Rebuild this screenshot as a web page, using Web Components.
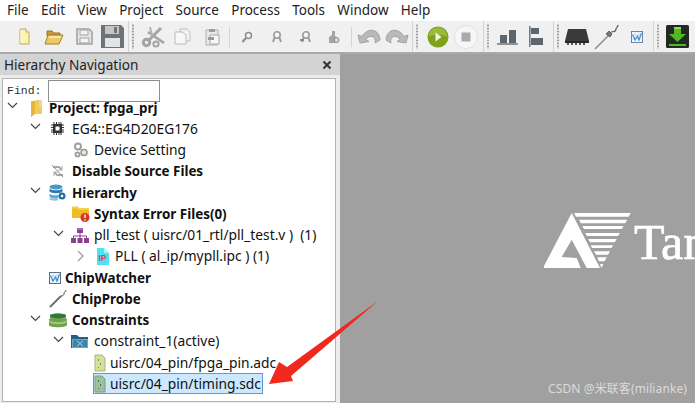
<!DOCTYPE html>
<html>
<head>
<meta charset="utf-8">
<title>Hierarchy Navigation</title>
<style>
    html, body { margin: 0; height: 100%; overflow: hidden; background: #a0a0a0; }
    body { font-family: "Noto Sans", "Open Sans", sans-serif; font-size: 14px; color: #1a1a1a; }
</style>
</head>
<body>

<ide-app></ide-app>

<script>
const ICONS = {
    newfile: [11, 17, `<path d="M1 1h6l3 3v12H1z" fill="#fdf3b0" stroke="#b9a866"/><path d="M7 1v3h3" fill="#fff" stroke="#b9a866"/><path d="M2 2v13" stroke="#fffde6"/>`],
    open: [20, 18, `<path d="M3 3h5l2 2h6v3H3z" fill="#c99a3a" stroke="#9c7420"/><path d="M1 16 4 7h15l-4 9z" fill="#f0c765" stroke="#a87e28"/><path d="M5 9h12" stroke="#fbe6a8" stroke-width="2"/>`],
    savegray: [17, 17, `<path d="M1 1h12l3 3v12H1z" fill="#e6e6e6" stroke="#a3a3a3" stroke-width="1.6"/><path d="M4 2h8v5H4zM4 10h9v5H4z" fill="#f2f2f2" stroke="#a3a3a3"/>`],
    save: [25, 25, `<path d="M1 1h20l3 3v20H1z" fill="#6f7377"/><path d="M5 2h14v8H5z" fill="#c4c6c8"/><path d="M14 3h3v6h-3z" fill="#6f7377"/><path d="M5 14h15v9H5z" fill="#e2e3e4"/>`],
    scissors: [25, 22, `<g fill="none" stroke="#a4a4a4" stroke-width="3"><path d="M8 14 20 2"/><path d="M7 6 23 17" stroke-width="2.6"/><circle cx="5.5" cy="16.5" r="3.2"/><circle cx="15" cy="18" r="2.6" stroke-width="2"/></g><path d="M8 1h2l2 8-2 1z" fill="#b4b4b4"/>`],
    copy: [17, 17, `<path d="M6 1h7l3 3v9H6z" fill="#f1f1f1" stroke="#c0c0c0"/><path d="M1 4h8l3 3v9H1z" fill="#f7f7f7" stroke="#bcbcbc"/>`],
    paste: [16, 18, `<path d="M2 2h12v15H2z" fill="#e8e8e8" stroke="#b0b0b0"/><path d="M5 1h6v3H5z" fill="#9c9c9c"/><path d="M6 7h9v9H6z" fill="#f6f6f6" stroke="#a8a8a8"/><path d="M4 9h6v3H4z" fill="#9a9a9a"/>`],
    find1: [12, 12, `<circle cx="7.5" cy="4.5" r="3" fill="#f3f3f3" stroke="#8d8d8d" stroke-width="1.5"/><path d="M5 7 1.500 11" stroke="#8d8d8d" stroke-width="2"/>`],
    find2: [12, 13, `<circle cx="6" cy="5" r="3.2" fill="#f3f3f3" stroke="#9a9a9a" stroke-width="1.6"/><path d="M2 12 3.500 8M10 12 8.500 8" stroke="#9a9a9a" stroke-width="2"/>`],
    find3: [13, 13, `<circle cx="7" cy="5" r="3.2" fill="#f3f3f3" stroke="#9a9a9a" stroke-width="1.6"/><path d="M3 12 4.500 8M11 12 9.500 8" stroke="#9a9a9a" stroke-width="2"/><path d="M1 10h4" stroke="#777" stroke-width="1.500"/>`],
    find4: [12, 14, `<path d="M4 1h3v5l3 2v5H1V7l3-2z" fill="#a5a5a5"/><circle cx="8.500" cy="10" r="2.500" fill="#d6d6d6" stroke="#8a8a8a"/>`],
    undo: [24, 17, `<path d="M3 15 1 7l4 1.500C8 3 14 1 18 3c3 1.500 5 5 5 9l-5 3c1-4-1-6-3-6.500-3-.5-5 1-6 3l3 2z" fill="#b9b9b9" stroke="#a3a3a3"/>`],
    redo: [25, 17, `<path d="M22 15l2-8-4 1.500C17 3 11 1 7 3 4 4.500 2 8 2 12l5 3c-1-4 1-6 3-6.500 3-.5 5 1 6 3l-3 2z" fill="#b9b9b9" stroke="#a3a3a3"/>`],
    run: [22, 22, `<circle cx="11" cy="11" r="10.500" fill="#7fa21b"/><path d="M1.500 11a9.500 9.500 0 0 1 19 0c-4-3-15-3-19 0z" fill="#98bb38"/><path d="M8.500 6.500v9l6-4.500z" fill="#f2f6e0"/>`],
    stop: [24, 24, `<circle cx="12" cy="12" r="11.500" fill="#f6f6f6" stroke="#e0e0e0"/><rect x="7.500" y="7.500" width="9" height="9" fill="#a9a9a9"/>`],
    bars: [21, 16, `<path d="M3 6h7v8H3zM12 1h7v13h-7z" fill="#5c666e"/><path d="M0 15h21" stroke="#6d767d" stroke-width="1.500"/>`],
    align: [15, 21, `<path d="M.8 0v21" stroke="#6d767d" stroke-width="1.500"/><path d="M2 2h8v6H2zM2 12h12v7H2z" fill="#5c666e"/>`],
    chip: [24, 17, `<path d="M3 1h18l3 12H0z" fill="#3a3a3a"/><path d="M0 13h24v2H0z" fill="#262626"/><path d="M2 15h2v2H2zM6 15h2v2H6zM10 15h2v2h-2zM14 15h2v2h-2zM18 15h2v2h-2z" fill="#555"/>`],
    probe: [26, 26, `<path d="M1 25 17 9" stroke="#8a8a8a" stroke-width="1.500" fill="none"/><path d="M15 7l3 3-2 3-4-3z" fill="#777" stroke="#666"/><path d="M17 8c3 0 5-1 5-3 0-1.500 2-1.500 2-4" fill="none" stroke="#555" stroke-width="1.200"/>`],
    watcher: [12, 12, `<rect x=".5" y=".5" width="11" height="11" fill="#f5f8fd" stroke="#6a7f9c"/><path d="M.5 4h11M.5 8h11M4 .5v11M8 .5v11" stroke="#ccd5e2" stroke-width=".7"/><path d="M1.500 3.500 4 9l2.500-4L8 9l2.500-7" fill="none" stroke="#3f8fd8" stroke-width="1.200"/>`],
    download: [23, 23, `<rect width="23" height="23" rx="1.500" fill="#202a20"/><path d="M8 2h7v7h5l-8.500 8L3 9h5z" fill="#52b52a"/><path d="M8 2h7v2H8z" fill="#9ad857"/><path d="M3 19h17v2H3z" fill="#52b52a"/>`],
    project: [13, 18, `<path d="M1 2h4l1-1h6v14H4l-3 3z" fill="#f2cc5a"/><path d="M1 2h4v13l-4 3z" fill="#e5b53c"/><path d="M9 1h3v7l-1.500-1L9 8z" fill="#dcdcb4"/>`],
    cpu: [15, 15, `<path d="M3 3h9v9H3z" fill="#333"/><path d="M5.500 5.500h4v4h-4z" fill="#fff"/><path d="M1 4h2M1 6.500h2M1 9h2M1 11h2M12 4h2M12 6.500h2M12 9h2M12 11h2M4 1v2M6.500 1v2M9 1v2M11 1v2M4 12v2M6.500 12v2M9 12v2M11 12v2" stroke="#333"/>`],
    gears: [15, 16, `<g fill="none" stroke="#a0a0a0" stroke-width="2"><circle cx="5" cy="4.500" r="3"/><circle cx="4.500" cy="12.500" r="2"/></g><circle cx="11" cy="10.500" r="3" fill="#e6e6e6" stroke="#8d9a8a" stroke-width="1.500"/>`],
    disable: [13, 14, `<path d="M2 3h6l3 3M12 11H6L3 8" fill="none" stroke="#8a8f94" stroke-width="1.300"/><path d="M1 1l11 12" stroke="#8a8f94"/><path d="M11 2v4H7M3 12V8h4" fill="none" stroke="#a8adb2"/>`],
    hierarchy: [17, 17, `<ellipse cx="7" cy="3" rx="6.500" ry="2.500" fill="#4a9ac9"/><path d="M.5 4v3c0 3 13 3 13 0V4c0 3-13 3-13 0z" fill="#2f7cb0"/><path d="M.5 9v3c0 3 9 3 9 1V11c-3 .5-9 .5-9-2z" fill="#5aa8d6"/><path d="M.5 14v1c0 2 8 2 9 1l-1-2c-3 1-8 0-8 0z" fill="#8cc3e2"/><circle cx="13" cy="12" r="3.500" fill="#1f6d9f"/><circle cx="13" cy="12" r="1.300" fill="#fff"/>`],
    syntax: [18, 18, `<path d="M0 3h6l1.500 2H17v8H0z" fill="#f0bb25"/><path d="M0 1.500h6L7.500 3H17v2H7L5.500 3.500H0z" fill="#f7d04a"/><circle cx="13" cy="12.500" r="4.500" fill="#d9342b"/><path d="M13 9.500v3.500" stroke="#fff" stroke-width="1.400"/><circle cx="13" cy="15" r=".8" fill="#fff"/>`],
    tree: [18, 15, `<path d="M6 0h6v5H6zM0 10h5v5H0zM6.500 10h5v5h-5zM13 10h5v5h-5z" fill="#8c3f8f"/><path d="M9 5v3M2.500 10V8h13v2M9 8v2" fill="none" stroke="#8c3f8f"/><path d="M6.500 0h5v2h-5z" fill="#b56ab8"/>`],
    ip: [12, 17, `<path d="M0 0h7l5 5v12H0z" fill="#49e3f4"/><path d="M7 0l5 5H7z" fill="#b2f3fa"/><text x="1.500" y="13" font-family="Liberation Sans, sans-serif" font-size="8.500" font-weight="700" fill="#e23c52">IP</text>`],
    chipwatch: [12, 12, `<rect x=".5" y=".5" width="11" height="11" fill="#f5f8fd" stroke="#55697f"/><path d="M.5 4h11M.5 8h11M4 .5v11M8 .5v11" stroke="#c4cedb" stroke-width=".7"/><path d="M1.500 3.500 4 9l2.500-4L8 9l2.500-7" fill="none" stroke="#3590d8" stroke-width="1.200"/>`],
    chipprobe: [18, 18, `<path d="M1 17 12 6" stroke="#6f6f6f" stroke-width="2" fill="none"/><path d="M12 6c3 0 3-2 3-3s2-1 2-3" fill="none" stroke="#444"/>`],
    constraints: [18, 15, `<path d="M1 2c0-2 16-2 16 0v4H1z" fill="#7fa856"/><ellipse cx="9" cy="3" rx="8" ry="2.600" fill="#2f7a3a"/><path d="M0 6h18v6c0 3-18 3-18 0z" fill="#6ea24c"/><path d="M0 7c3 3 15 3 18 0v2c-3 3-15 3-18 0z" fill="#a5c77b"/>`],
    folder: [18, 15, `<path d="M0 1h6l2 2h9v11H0z" fill="#1f6285"/><path d="M1 5h16v9H1z" fill="#6fa9c7"/><path d="M2 6h14v7H2z" fill="#3f84a8"/><path d="M6 7l6 5M12 7l-6 5" stroke="#a8d0e2"/>`],
    sdc: [12, 18, `<path d="M1 1h7l3 3v13H1z" fill="#d3e09c" stroke="#aab57d"/><path d="M4 5h1v2H4zM6 9h1v2H6zM4 13h1v1H4z" fill="#7c8f6a"/>`],
    sdcsel: [12, 18, `<path d="M1 1h7l3 3v13H1z" fill="#9cc09a" stroke="#7c9e90"/><path d="M4 5h1v2H4zM6 9h1v2H6zM4 13h1v1H4z" fill="#4f6f6f"/>`],
    close: [10, 10, `<path d="M1.500 1.500l7 7M8.500 1.500l-7 7" stroke="#333" stroke-width="2"/>`]
};

class IdeIcon extends HTMLElement {
    constructor(){
        super();
        this.shadow = this.attachShadow({ mode: 'open' });
    }
    connectedCallback(){
        let [w, h, body] = ICONS[this.getAttribute("name")];
        this.shadow.innerHTML = `
        <style>
            :host { display: inline-flex; flex: none; }
            svg { display: block; }
        </style>
        <svg width="${w}" height="${h}" viewBox="0 0 ${w} ${h}">${body}</svg>`;
    }
}
customElements.define('ide-icon', IdeIcon);

class IdeMenubar extends HTMLElement {
    constructor(){
        super();
        this.shadow = this.attachShadow({ mode: 'open' });
    }
    connectedCallback(){
        let items = ["File", "Edit", "View", "Project", "Source", "Process", "Tools", "Window", "Help"];
        this.shadow.innerHTML = `
        <style>
            :host { display: flex; height: 21px; padding-left: 7px; gap: 12.3px; align-items: center; background: #fff; color: #222; font-size: 13.5px; }
            span { line-height: 21px; }
        </style>
        ${items.map(i => `<span>${i}</span>`).join("")}`;
    }
}
customElements.define('ide-menubar', IdeMenubar);

class IdeToolbar extends HTMLElement {
    constructor(){
        super();
        this.shadow = this.attachShadow({ mode: 'open' });
    }
    connectedCallback(){
        this.shadow.innerHTML = `
        <style>
            :host { display: flex; height: 31px; align-items: center; background: #f0f0f0; border-bottom: 2px solid #a9a9a9; }
        </style>
        <slot></slot>`;
    }
}
customElements.define('ide-toolbar', IdeToolbar);

class IdeToolSep extends HTMLElement {
    constructor(){
        super();
        this.shadow = this.attachShadow({ mode: 'open' });
    }
    connectedCallback(){
        let grip = this.hasAttribute("thin") ? "" : `<i></i>`;
        this.shadow.innerHTML = `
        <style>
            :host { display: flex; flex: none; align-items: center; gap: 3px; height: 31px; }
            b { display: block; width: 1px; height: 100%; background: #d4d4d4; }
            i { display: block; width: 2px; height: 25px; background-image: radial-gradient(#9e9e9e .7px, transparent .9px); background-size: 2px 3px; }
            :host([thin]) b { height: 20px; }
        </style>
        <b></b>${grip}`;
    }
}
customElements.define('ide-tool-sep', IdeToolSep);

class IdeTreeRow extends HTMLElement {
    constructor(){
        super();
        this.shadow = this.attachShadow({ mode: 'open' });
    }
    connectedCallback(){
        let open = this.getAttribute("arrow");
        let arrow = "";
        if (open == "open") arrow = `<path d="M1 1l4.500 4.500L10 1" fill="none" stroke="#444" stroke-width="1.200"/>`;
        if (open == "closed") arrow = `<path d="M1 0l5 5-5 5" fill="none" stroke="#999" stroke-width="1.200"/>`;
        this.shadow.innerHTML = `
        <style>
            :host { display: flex; align-items: center; height: 21.25px; padding-left: var(--indent, 0px); white-space: nowrap; font-size: 13.8px; color: #111; }
            :host([bold]) { font-size: 13.4px; font-weight: 700; }
            .arrow { width: var(--arrow-w, 23px); flex: none; display: flex; }
            .item { display: flex; align-items: center; }
            .iconbox { display: flex; flex: none; width: var(--icon-w, 22px); }
            .label { line-height: 18px; height: 18px; padding: 0 1px; }
            :host([selected]) .item { background: #cce8ff; box-shadow: 0 0 0 1px #5b9bd5; height: 19px; }
        </style>
        <span class="arrow"><svg width="11" height="11" viewBox="0 0 11 11">${arrow}</svg></span>
        <span class="item">
            <span class="iconbox"><slot name="icon"></slot></span>
            <span class="label"><slot></slot></span>
        </span>`;
    }
}
customElements.define('ide-tree-row', IdeTreeRow);

class IdeNavPanel extends HTMLElement {
    constructor(){
        super();
        this.shadow = this.attachShadow({ mode: 'open' });
    }
    connectedCallback(){
        this.shadow.innerHTML = `
        <style>
            :host { display: flex; flex-direction: column; width: 340px; flex: none; background: #ececec; overflow: hidden; }
            .title { display: flex; align-items: center; justify-content: space-between; height: 21px; padding: 0 8px 0 4px; background: #d3d3d3; color: #222; font-size: 13.6px; flex: none; }
            .body { flex: 1; margin: 3px 4px 1px 2px; background: #fff; border: 1px solid #b4b4b4; overflow: hidden; }
            .find { display: flex; align-items: flex-start; height: 17px; padding-left: 4px; margin-top: 1px; }
            .find label { font-family: "Liberation Mono", monospace; font-size: 11.5px; line-height: 21px; width: 41px; color: #333; }
            .find .box { width: 110px; height: 20px; border: 1px solid #8e8e8e; background: #fff; flex: none; }
        </style>
        <div class="title"><span>Hierarchy Navigation</span><ide-icon name="close"></ide-icon></div>
        <div class="body">
            <div class="find"><label>Find:</label><div class="box"></div></div>
            <div class="rows"><slot></slot></div>
        </div>`;
    }
}
customElements.define('ide-nav-panel', IdeNavPanel);

class IdeLogoPane extends HTMLElement {
    constructor(){
        super();
        this.shadow = this.attachShadow({ mode: 'open' });
    }
    connectedCallback(){
        this.shadow.innerHTML = `
        <style>
            :host { display: block; flex: 1; position: relative; background: #a0a0a0; overflow: hidden; }
            svg { position: absolute; left: 204px; top: 159px; }
            .name { position: absolute; left: 294px; top: 153px; font: 400 50px/70px "Liberation Serif", serif; -webkit-text-stroke: .7px #fff; color: #fff; white-space: nowrap; }
        </style>
        <svg width="88" height="56" viewBox="0 0 88 56">
            <path d="M27.700 0 0 53v2h36.700l-4-10-15-1 10-17.300L42.700 55H56z" fill="#fff"/>
            <path d="M30 0h56.700l-2 3.700H32zM35 6.700h48.300l-2 3.600H37zM38.300 13h41.400l-2 3H40zM41 20h35l-2 3H43zM44.300 26h28.400l-2 3.300H46zM46.700 32.300h22.600l-2 2.700H48zM50 38.300h16l-2 3.400H52zM53.300 44.300h9.400l-2 4H55zM56 51h3.300l-1.300 3.300h-1z" fill="#fff"/>
        </svg>
        <span class="name">Tan</span>`;
    }
}
customElements.define('ide-logo-pane', IdeLogoPane);

class IdeApp extends HTMLElement {
    constructor(){
        super();
        this.shadow = this.attachShadow({ mode: 'open' });
    }
    connectedCallback(){
        let icon = (name, m) => `<ide-icon name="${name}" style="margin-left:${m}px"></ide-icon>`;
        let row = (o) => `<ide-tree-row ${o.arrow ? `arrow="${o.arrow}"` : ""} ${o.bold ? "bold" : ""} ${o.sel ? "selected" : ""}
            style="--indent:${o.x}px;--arrow-w:${o.aw}px;--icon-w:${o.iw}px">
            <ide-icon slot="icon" name="${o.icon}"></ide-icon>${o.text}</ide-tree-row>`;

        this.shadow.innerHTML = `
        <style>
            :host { display: flex; flex-direction: column; width: 695px; height: 403px; position: relative; overflow: hidden; }
            .main { display: flex; flex: 1; min-height: 0; }
            .arrow { position: absolute; left: 268px; top: 300px; }
            .mark { position: absolute; right: 8px; bottom: 6px; font: 12px "Noto Sans", "Noto Sans CJK SC", sans-serif; letter-spacing: .1px; color: #dcdcdc; white-space: nowrap; }
        </style>
        <ide-menubar></ide-menubar>
        <ide-toolbar>
            ${icon("newfile", 19)}${icon("open", 14)}${icon("savegray", 12)}${icon("save", 7)}
            <ide-tool-sep style="margin-left:3px"></ide-tool-sep>
            ${icon("scissors", 7)}${icon("copy", 8)}${icon("paste", 13)}
            <ide-tool-sep thin style="margin-left:9px"></ide-tool-sep>
            ${icon("find1", 11)}${icon("find2", 18)}${icon("find3", 16)}${icon("find4", 16)}
            <ide-tool-sep thin style="margin-left:11px"></ide-tool-sep>
            ${icon("undo", 5)}${icon("redo", 3)}
            <ide-tool-sep style="margin-left:3px"></ide-tool-sep>
            ${icon("run", 9)}${icon("stop", 5)}
            <ide-tool-sep style="margin-left:5px"></ide-tool-sep>
            ${icon("bars", 8)}${icon("align", 11)}
            <ide-tool-sep style="margin-left:9px"></ide-tool-sep>
            ${icon("chip", 6)}${icon("probe", 5)}${icon("watcher", 11)}
            <ide-tool-sep style="margin-left:10px"></ide-tool-sep>
            ${icon("download", 7)}
        </ide-toolbar>
        <div class="main">
            <ide-nav-panel>
                ${row({ x: 4, aw: 23, iw: 18, icon: "project", arrow: "open", bold: 1, text: "Project: fpga_prj" })}
                ${row({ x: 27, aw: 20, iw: 21, icon: "cpu", arrow: "open", text: "EG4::EG4D20EG176" })}
                ${row({ x: 70, aw: 0, iw: 20, icon: "gears", text: "Device Setting" })}
                ${row({ x: 48, aw: 0, iw: 20, icon: "disable", bold: 1, text: "Disable Source Files" })}
                ${row({ x: 27, aw: 19, iw: 22, icon: "hierarchy", arrow: "open", bold: 1, text: "Hierarchy" })}
                ${row({ x: 69, aw: 0, iw: 21, icon: "syntax", bold: 1, text: "Syntax Error Files(0)" })}
                ${row({ x: 50, aw: 18, iw: 22, icon: "tree", arrow: "open", text: "pll_test ( uisrc/01_rtl/pll_test.v )&nbsp; (1)" })}
                ${row({ x: 74, aw: 20, iw: 17, icon: "ip", arrow: "closed", text: "PLL ( al_ip/mypll.ipc ) (1)" })}
                ${row({ x: 46, aw: 0, iw: 15, icon: "chipwatch", bold: 1, text: "ChipWatcher" })}
                ${row({ x: 46, aw: 0, iw: 22, icon: "chipprobe", bold: 1, text: "ChipProbe" })}
                ${row({ x: 27, aw: 19, iw: 22, icon: "constraints", arrow: "open", bold: 1, text: "Constraints" })}
                ${row({ x: 50, aw: 18, iw: 22, icon: "folder", arrow: "open", text: "constraint_1(active)" })}
                ${row({ x: 91, aw: 0, iw: 15, icon: "sdc", text: "uisrc/04_pin/fpga_pin.adc" })}
                ${row({ x: 91, aw: 0, iw: 15, icon: "sdcsel", sel: 1, text: "uisrc/04_pin/timing.sdc" })}
            </ide-nav-panel>
            <ide-logo-pane></ide-logo-pane>
        </div>
        <svg class="arrow" width="112" height="86" viewBox="0 0 112 86">
            <path d="M110 1 19 67l-8-5L1 84l24-3-2-5z" fill="#f0281e"/>
        </svg>
        <span class="mark">CSDN @米联客(milianke)</span>`;
    }
}
customElements.define('ide-app', IdeApp);
</script>
</body>
</html>
